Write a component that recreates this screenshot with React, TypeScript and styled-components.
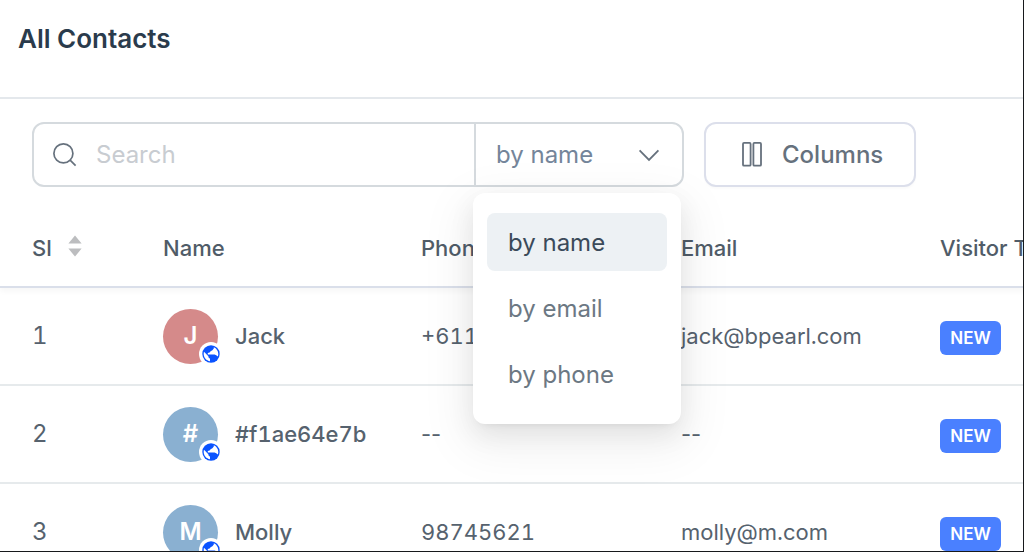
import React, { useState } from "react";
import styled, { createGlobalStyle } from "styled-components";

const GlobalStyle = createGlobalStyle`
  *, *::before, *::after { box-sizing: border-box; }
  body { margin: 0; background: #fff; }
  body, button, input, select, table { font-family: Inter, "Liberation Sans", sans-serif; }
`;

const Page = styled.main`
  height: 100vh;
  overflow: hidden;
  background: #fff;
  border-right: 1px solid #17191c;
  border-bottom: 1px solid #17191c;
`;

const Header = styled.header`
  padding: 23px 18px 42px;
  border-bottom: 2px solid #e4e8ec;
`;

const Title = styled.h1`
  margin: 0;
  font-size: 26px;
  font-weight: 600;
  line-height: 32px;
  color: #2a3b4c;
`;

const Toolbar = styled.div`
  display: flex;
  gap: 20px;
  padding: 23px 32px 20px;
`;

const SearchGroup = styled.div`
  display: flex;
  flex: 0 1 652px;
  min-width: 0;
  height: 65px;
  border: 2px solid #d5dade;
  border-radius: 12px;
`;

const SearchField = styled.label`
  display: flex;
  flex: 1;
  align-items: center;
  gap: 19px;
  min-width: 0;
  padding-left: 19px;
  color: #66717d;
`;

const SearchInput = styled.input`
  flex: 1;
  min-width: 0;
  padding: 0;
  border: 0;
  outline: 0;
  background: none;
  font-size: 24px;
  line-height: 32px;
  color: #4f5b67;
  &::placeholder { color: #c8ccd1; opacity: 1; }
`;

const Picker = styled.div`
  position: relative;
  display: flex;
  flex: 0 0 208px;
  border-left: 2px solid #d5dade;
`;

const PickerSelect = styled.select`
  width: 100%;
  padding: 0 20px;
  border: 0;
  outline: 0;
  appearance: none;
  background: none;
  font-size: 24px;
  line-height: 32px;
  color: #74859a;
`;

const PickerArrow = styled.svg`
  position: absolute;
  top: 25px;
  right: 22px;
  pointer-events: none;
`;

const Menu = styled.div`
  position: absolute;
  z-index: 2;
  top: calc(100% + 8px);
  left: -3px;
  display: grid;
  gap: 8px;
  width: 208px;
  padding: 20px 14px 21px;
  border-radius: 12px;
  background: #fff;
  box-shadow:
    0 5px 10px -7px rgba(0, 0, 0, 0.12),
    0 10px 26px rgba(0, 0, 0, 0.08),
    0 15px 46px 13px rgba(0, 0, 0, 0.05);
`;

const MenuItem = styled.button<{ $active: boolean }>`
  height: 58px;
  padding: 2px 21px 0;
  border: 0;
  border-radius: 8px;
  background: ${(p) => (p.$active ? "#edf1f4" : "transparent")};
  font-size: 24px;
  line-height: 32px;
  text-align: left;
  color: ${(p) => (p.$active ? "#3b4a5a" : "#6c7883")};
`;

const ColumnsButton = styled.button`
  display: flex;
  align-items: center;
  gap: 20px;
  flex: 0 0 212px;
  height: 65px;
  padding: 0 30px 0 36px;
  border: 2px solid #dcdfeb;
  border-radius: 12px;
  background: #fff;
  box-shadow: 0 2px 2px rgba(0, 0, 0, 0.02);
  font-size: 24px;
  font-weight: 500;
  line-height: 32px;
  color: #66717d;
`;

const TableWrap = styled.div`
  overflow: hidden;
`;

const Table = styled.table`
  width: 100%;
  min-width: 1200px;
  table-layout: fixed;
  border-collapse: separate;
  border-spacing: 0;
`;

const Col = styled.col<{ $width?: number }>`
  width: ${(p) => (p.$width ? `${p.$width}px` : "auto")};
`;

const HeadRow = styled.tr`
  box-shadow: 0 3px 6px rgba(0, 0, 0, 0.04);
`;

const HeadCell = styled.th<{ $first?: boolean }>`
  height: 81px;
  padding: 2px 0 0 ${(p) => (p.$first ? 32 : 0)}px;
  border-bottom: 2px solid #dadfea;
  font-size: 22px;
  font-weight: 500;
  line-height: 28px;
  text-align: left;
  white-space: nowrap;
  color: #505c68;
`;

const SortLabel = styled.span`
  display: flex;
  align-items: center;
  gap: 16px;
`;

const SortMark = styled.svg`
  margin-bottom: 4px;
`;

const Cell = styled.td<{ $first?: boolean; $strong?: boolean; $empty?: boolean }>`
  height: 98px;
  padding: 0 0 0 ${(p) => (p.$first ? 32 : 0)}px;
  border-bottom: 2px solid #e6eaec;
  font-size: ${(p) => (p.$first ? 24 : 22)}px;
  font-weight: ${(p) => (p.$strong ? 500 : 400)};
  font-variant-numeric: ${(p) => (p.$empty ? "normal" : "tabular-nums")};
  line-height: 28px;
  white-space: nowrap;
  color: #56626e;
`;

const Person = styled.div`
  display: flex;
  align-items: center;
  gap: 17px;
`;

const Avatar = styled.div<{ $color: string }>`
  position: relative;
  display: grid;
  place-items: center;
  width: 55px;
  height: 55px;
  border-radius: 50%;
  background: ${(p) => p.$color};
  font-size: 24px;
  font-weight: 600;
  color: #fff;
`;

const Source = styled.span`
  position: absolute;
  right: -5px;
  bottom: -2px;
  display: grid;
  place-items: center;
  width: 24px;
  height: 24px;
  border-radius: 50%;
  background: #fff;
`;

const Badge = styled.span`
  display: grid;
  place-items: center;
  width: 61px;
  height: 34px;
  margin-top: 4px;
  border-radius: 6px;
  background: #4a80ff;
  font-size: 17px;
  font-weight: 600;
  line-height: 20px;
  color: #fff;
`;

const SearchIcon = () => (
  <svg width="24" height="24" viewBox="0 0 24 24" fill="none" stroke="currentColor" strokeWidth="1.7" aria-hidden="true">
    <circle cx="10.4" cy="10.4" r="9.5" />
    <path d="M17.1 17.1 22.6 22.6" />
  </svg>
);

const ColumnsIcon = () => (
  <svg width="20" height="25" viewBox="0 0 20 25" fill="none" stroke="currentColor" strokeWidth="1.8" aria-hidden="true">
    <rect x="1" y="0.9" width="7.6" height="22.8" rx="1" />
    <rect x="11.4" y="0.9" width="7.6" height="22.8" rx="1" />
  </svg>
);

const SortIcon = () => (
  <SortMark width="14" height="22" viewBox="0 0 14 22" fill="#bcbdbf" aria-hidden="true">
    <path d="M7 0.4 13.6 8.6H0.4Z" />
    <path d="M7 21.6 13.6 13.6H0.4Z" />
  </SortMark>
);

const GlobeIcon = () => (
  <svg width="18" height="18" viewBox="0 0 18 18" aria-hidden="true">
    <circle cx="9" cy="9" r="8.7" fill="#0a53ff" />
    <path
      fill="#fff"
      d="M2 6.8 6.4 11.2V12.2L8 13.8V16.2C4.4 15.7 1.7 12.6 1.7 9 1.7 8.2 1.8 7.5 2 6.8ZM11.8 2.3C14.5 3.4 16.3 6 16.3 9 16.3 10 16.1 10.6 15.8 11.4L14.2 10.2 12.6 9.4H5.8V7.9L7.6 7.4 8.6 6.2 10.4 5.2 11.8 3.6Z"
    />
  </svg>
);

const options = ["by name", "by email", "by phone"];

const contacts = [
  { name: "Jack", initial: "J", color: "#d58a8a", phone: "+61123456", email: "jack@bpearl.com" },
  { name: "#f1ae64e7b", initial: "#", color: "#8ab0d1", phone: "", email: "" },
  { name: "Molly", initial: "M", color: "#8ab0d1", phone: "98745621", email: "molly@m.com" },
];

export default function App() {
  const [field, setField] = useState(options[0]);

  return (
    <Page>
      <GlobalStyle />
      <Header>
        <Title>All Contacts</Title>
      </Header>
      <Toolbar>
        <SearchGroup>
          <SearchField>
            <SearchIcon />
            <SearchInput type="text" placeholder="Search" aria-label="Search" />
          </SearchField>
          <Picker>
            <PickerSelect aria-label="Search field" value={field} onChange={(e) => setField(e.target.value)}>
              {options.map((o) => (
                <option key={o}>{o}</option>
              ))}
            </PickerSelect>
            <PickerArrow width="22" height="13" viewBox="0 0 22 13" fill="none" stroke="#66717d" strokeWidth="1.8" aria-hidden="true">
              <path d="M1.6 1.4 11 11 20.4 1.4" />
            </PickerArrow>
            <Menu role="listbox" aria-label="Search field options">
              {options.map((o) => (
                <MenuItem
                  key={o}
                  type="button"
                  role="option"
                  aria-selected={o === field}
                  $active={o === field}
                  onClick={() => setField(o)}
                >
                  {o}
                </MenuItem>
              ))}
            </Menu>
          </Picker>
        </SearchGroup>
        <ColumnsButton type="button">
          <ColumnsIcon />
          Columns
        </ColumnsButton>
      </Toolbar>
      <TableWrap>
        <Table>
          <colgroup>
            <Col $width={163} />
            <Col $width={258} />
            <Col $width={260} />
            <Col $width={259} />
            <Col />
          </colgroup>
          <thead>
            <HeadRow>
              <HeadCell scope="col" $first>
                <SortLabel>
                  Sl
                  <SortIcon />
                </SortLabel>
              </HeadCell>
              <HeadCell scope="col">Name</HeadCell>
              <HeadCell scope="col">Phone</HeadCell>
              <HeadCell scope="col">Email</HeadCell>
              <HeadCell scope="col">Visitor Type</HeadCell>
            </HeadRow>
          </thead>
          <tbody>
            {contacts.map((c, i) => (
              <tr key={c.name}>
                <Cell $first>{i + 1}</Cell>
                <Cell $strong>
                  <Person>
                    <Avatar $color={c.color}>
                      {c.initial}
                      <Source>
                        <GlobeIcon />
                      </Source>
                    </Avatar>
                    {c.name}
                  </Person>
                </Cell>
                <Cell $empty={!c.phone}>{c.phone || "--"}</Cell>
                <Cell $empty={!c.email}>{c.email || "--"}</Cell>
                <Cell>
                  <Badge>NEW</Badge>
                </Cell>
              </tr>
            ))}
          </tbody>
        </Table>
      </TableWrap>
    </Page>
  );
}
